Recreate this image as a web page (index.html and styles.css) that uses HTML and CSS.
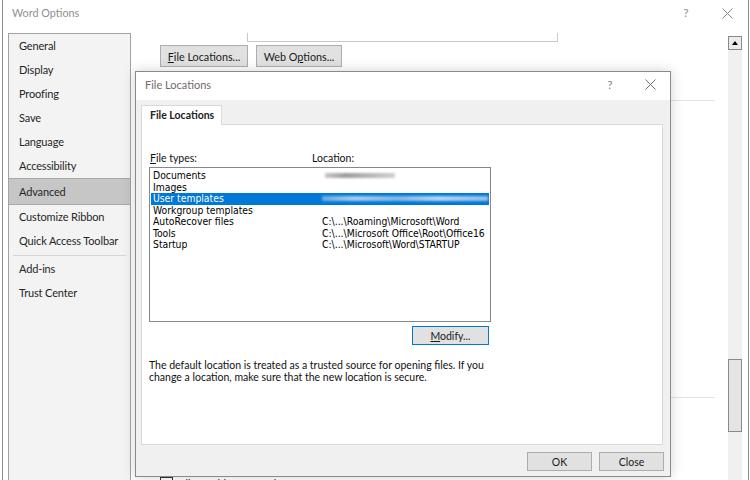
FILE: index.html
```html
<!DOCTYPE html>
<html lang="en">
<head>
    <meta charset="UTF-8">
    <title>Word Options - File Locations</title>
    <link rel="stylesheet" href="styles.css">
</head>
<body>
    <div class="window">
        <!-- title bar -->
        <div class="titlebar">
            <span class="title">Word Options</span>
            <span class="help">?</span>
            <span class="close">
                <svg width="11" height="11" viewBox="0 0 11 11"><path d="M0.5 0.5L10.5 10.5M10.5 0.5L0.5 10.5" stroke="#8a8a8a" stroke-width="1"/></svg>
            </span>
        </div>

        <div class="window-body">
            <!-- left menu -->
            <nav class="sidebar">
                <div class="nav-item">General</div>
                <div class="nav-item">Display</div>
                <div class="nav-item">Proofing</div>
                <div class="nav-item">Save</div>
                <div class="nav-item">Language</div>
                <div class="nav-item">Accessibility</div>
                <div class="nav-item active">Advanced</div>
                <div class="nav-item">Customize Ribbon</div>
                <div class="nav-item">Quick Access Toolbar</div>
                <div class="nav-sep"></div>
                <div class="nav-item">Add-ins</div>
                <div class="nav-item">Trust Center</div>
            </nav>

            <!-- options page behind the dialog -->
            <main class="content">
                <div class="preview-box"></div>
                <div class="btn-row">
                    <button class="btn file-btn"><u>F</u>ile Locations...</button>
                    <button class="btn web-btn">Web O<u>p</u>tions...</button>
                </div>
                <div class="section-line"></div>
                <div class="section-line lower"></div>
                <div class="check-row">
                    <span class="checkbox"></span>
                    <span>Allow table rows to lay out apart</span>
                </div>
            </main>

            <div class="scrollbar">
                <div class="scroll-up"><span class="arrow"></span></div>
                <div class="scroll-track">
                    <div class="scroll-thumb"></div>
                </div>
            </div>
        </div>

        <!-- File Locations dialog -->
        <div class="dialog">
            <div class="dialog-titlebar">
                <span class="dialog-title">File Locations</span>
                <span class="dialog-help">?</span>
                <span class="dialog-close">
                    <svg width="11" height="11" viewBox="0 0 11 11"><path d="M0.5 0.5L10.5 10.5M10.5 0.5L0.5 10.5" stroke="#6e6e6e" stroke-width="1"/></svg>
                </span>
            </div>
            <div class="dialog-body">
                <div class="tabs">
                    <div class="tab">File Locations</div>
                </div>
                <div class="tab-panel">
                    <div class="col-labels">
                        <span class="col-type"><u>F</u>ile types:</span>
                        <span>Location:</span>
                    </div>
                    <div class="listbox">
                        <div class="list-row"><span class="col-name">Documents</span><span class="blur-path short"></span></div>
                        <div class="list-row"><span class="col-name">Images</span><span></span></div>
                        <div class="list-row selected"><span class="col-name">User templates</span><span class="blur-path long"></span></div>
                        <div class="list-row"><span class="col-name">Workgroup templates</span><span></span></div>
                        <div class="list-row"><span class="col-name">AutoRecover files</span><span>C:\...\Roaming\Microsoft\Word</span></div>
                        <div class="list-row"><span class="col-name">Tools</span><span>C:\...\Microsoft Office\Root\Office16</span></div>
                        <div class="list-row"><span class="col-name">Startup</span><span>C:\...\Microsoft\Word\STARTUP</span></div>
                    </div>
                    <div class="modify-row">
                        <button class="btn modify-btn"><u>M</u>odify...</button>
                    </div>
                    <p class="note">The default location is treated as a trusted source for opening files. If you<br>change a location, make sure that the new location is secure.</p>
                </div>
                <div class="dialog-footer">
                    <button class="btn footer-btn">OK</button>
                    <button class="btn footer-btn">Close</button>
                </div>
            </div>
        </div>
    </div>
</body>
</html>
```

FILE: styles.css
```css
* {
    margin: 0;
    padding: 0;
    box-sizing: border-box;
}

body {
    width: 750px;
    height: 480px;
    overflow: hidden;
    background-color: #fff;
    font-family: 'Lato', 'Noto Sans', sans-serif;
    color: #262626;
}

/* 主窗口 */
.window {
    position: relative;
    margin-left: 2px;
    width: 747px;
    height: 480px;
    overflow: hidden;
    border-left: 1px solid #8c8c8c;
    border-right: 1px solid #8c8c8c;
}

.titlebar {
    display: flex;
    height: 33px;
}

.title {
    flex: 1;
    padding-left: 9px;
    height: 26px;
    line-height: 26px;
    font-size: 10.8px;
    color: #8f8f8f;
}

.help {
    width: 40px;
    height: 26px;
    line-height: 26px;
    text-align: center;
    font-size: 12px;
    color: #8f8f8f;
}

.close {
    width: 42px;
    height: 26px;
    display: flex;
    align-items: center;
    justify-content: center;
}

.window-body {
    display: flex;
}

/* 左侧菜单 */
.sidebar {
    margin-left: 5px;
    width: 123px;
    height: 460px;
    background-color: #f3f3f3;
    border: 1px solid #a3a3a3;
}

.nav-item {
    height: 24px;
    line-height: 24px;
    padding-left: 10px;
    font-size: 11px;
    letter-spacing: -0.15px;
    white-space: nowrap;
    color: #262626;
}

.nav-item.active {
    height: 27px;
    line-height: 25px;
    background-color: #c6c6c6;
    border-top: 1px solid #a8a8a8;
    border-bottom: 1px solid #a8a8a8;
}

.nav-sep {
    height: 1px;
    margin: 2px 4px 1px 4px;
    background-color: #d6d6d6;
}

/* 后面的设置页 */
.content {
    flex: 1;
    height: 460px;
}

.preview-box {
    margin-left: 116px;
    width: 311px;
    height: 9px;
    border: 1px solid #c8c8c8;
    border-top: none;
}

.btn-row {
    display: flex;
    gap: 8px;
    margin-top: 3px;
    margin-left: 29px;
}

.btn {
    font-family: 'Lato', 'Noto Sans', sans-serif;
    background-color: #e1e1e1;
    border: 1px solid #adadad;
    color: #1a1a1a;
    cursor: pointer;
}

.btn u {
    text-underline-offset: 1px;
}

.file-btn {
    width: 88px;
    height: 22px;
    font-size: 10.8px;
}

.web-btn {
    width: 86px;
    height: 22px;
    font-size: 10.8px;
}

.section-line {
    margin-top: 33px;
    margin-left: 29px;
    width: 555px;
    height: 1px;
    background-color: #e3e3e3;
}

.section-line.lower {
    margin-top: 296px;
}

.check-row {
    display: flex;
    gap: 5px;
    margin-top: 79px;
    margin-left: 29px;
    font-size: 11px;
}

.checkbox {
    width: 13px;
    height: 13px;
    border: 1px solid #333;
}

/* 滚动条 */
.scrollbar {
    width: 14px;
    margin-top: 3px;
    margin-right: 6px;
    height: 460px;
    display: flex;
    flex-direction: column;
}

.scroll-up {
    height: 14px;
    border: 1px solid #8a8a8a;
    background-color: #ececec;
    display: flex;
    align-items: center;
    justify-content: center;
}

.arrow {
    width: 0;
    height: 0;
    border-left: 3px solid transparent;
    border-right: 3px solid transparent;
    border-bottom: 4px solid #000;
}

.scroll-track {
    flex: 1;
    background-color: #f0f0f0;
    padding-top: 309px;
}

.scroll-thumb {
    height: 73px;
    background-color: #e4e4e4;
    border: 1px solid #8a8a8a;
}

/* 文件位置对话框 */
.dialog {
    position: absolute;
    left: 132px;
    top: 71px;
    width: 536px;
    height: 406px;
    border: 1px solid #8a8a8a;
    background-color: #f0f0f0;
    box-shadow: 0 0 12px rgba(0, 0, 0, 0.18);
    overflow: hidden;
}

.dialog-titlebar {
    display: flex;
    align-items: center;
    height: 28px;
    padding-bottom: 3px;
    background-color: #fff;
    font-size: 11px;
}

.dialog-title {
    flex: 1;
    padding-left: 9px;
    color: #736a6a;
}

.dialog-help {
    width: 40px;
    text-align: center;
    color: #7a7a7a;
}

.dialog-close {
    width: 40px;
    display: flex;
    justify-content: center;
}

.dialog-body {
    padding: 5px 7px 0 5px;
    font-size: 10.5px;
    color: #111;
}

.tabs {
    display: flex;
}

.tab {
    position: relative;
    z-index: 1;
    width: 81px;
    height: 20px;
    line-height: 19px;
    margin-bottom: -1px;
    padding-left: 8px;
    background-color: #fff;
    border: 1px solid #d9d9d9;
    border-bottom: none;
    font-weight: 700;
    color: #222;
}

.tab-panel {
    height: 321px;
    padding: 27px 0 0 7px;
    background-color: #fff;
    border: 1px solid #d9d9d9;
}

.col-labels {
    display: flex;
    height: 12px;
    line-height: 12px;
}

.col-type {
    width: 163px;
    padding-left: 1px;
}

.listbox {
    margin-top: 3px;
    width: 342px;
    height: 155px;
    padding-top: 2px;
    border: 1px solid #828790;
    font-family: 'DejaVu Sans Condensed', 'DejaVu Sans', sans-serif;
    font-size: 10.3px;
}

.list-row {
    display: flex;
    height: 11.5px;
    line-height: 11.5px;
    margin: 0 1px;
    padding-left: 2px;
    white-space: nowrap;
    color: #000;
}

.list-row.selected {
    background-color: #0078d7;
    color: #fff;
}

.col-name {
    width: 169px;
}

.blur-path {
    display: block;
    height: 5px;
    margin-top: 3px;
    filter: blur(1.2px);
}

.blur-path.short {
    width: 70px;
    margin-left: 3px;
    background: linear-gradient(90deg, #c8c8c8, #9c9c9c 30%, #b4b4b4 60%, #d0d0d0);
}

.blur-path.long {
    width: 166px;
    background: linear-gradient(90deg, #6aa9e0, #a9cdef 20%, #7fb6e6 45%, #b6d5f1 70%, #8fbfe9);
}

.modify-row {
    width: 342px;
    margin-top: 4px;
    display: flex;
    justify-content: flex-end;
}

.modify-btn {
    width: 77px;
    height: 19px;
    margin-right: 2px;
    font-size: 10.5px;
    border-color: #0078d7;
}

.note {
    margin-top: 14px;
    line-height: 12px;
}

.dialog-footer {
    display: flex;
    justify-content: flex-end;
    gap: 7px;
    margin-top: 7px;
    margin-right: -1px;
}

.footer-btn {
    width: 65px;
    height: 19px;
    font-size: 10.5px;
}
```
